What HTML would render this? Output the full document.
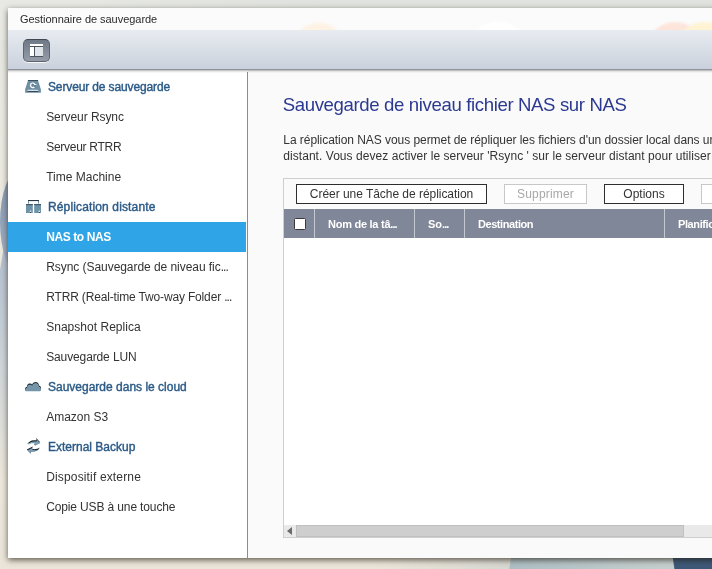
<!DOCTYPE html>
<html lang="fr">
<head>
<meta charset="utf-8">
<title>Gestionnaire de sauvegarde</title>
<style>
html,body{margin:0;padding:0;}
body{width:712px;height:569px;overflow:hidden;position:relative;background:#e8e9e4;font-family:"Liberation Sans",sans-serif;color:#333;}
.abs{position:absolute;}
#wall{left:0;top:0;width:712px;height:569px;overflow:hidden;background:linear-gradient(90deg,rgba(234,234,229,.9),rgba(234,234,229,0) 45%) 0 0/712px 40px no-repeat,linear-gradient(#dfe2de 0,#e4e6e1 20px,#ebeae2 120px,#ece8dd 300px,#ece6db 500px,#ebe5d9 569px);}
#wl{left:0;top:170px;width:40px;height:104px;border-radius:50%;background:linear-gradient(#8a9cb4 0,#93a4ba 50%,#a7b5c6 100%);}
#wl2{left:0;top:228px;width:10px;height:262px;background:linear-gradient(#aab7c7 0,#b7c3cf 40px,#c2ccd4 90px,#cdd4d9 130px,#d7dad9 172px,#e0e0da 205px,rgba(236,231,220,0) 250px);clip-path:polygon(100% 0,70% 0,50% 12px,0 42px,0 100%,100% 100%);}
#wb1{left:511px;top:548px;width:210px;height:22px;background:linear-gradient(90deg,#aebfc5,#c6cfce 75%);transform:skewX(-10deg);}
#wb2{left:673px;top:548px;width:60px;height:22px;background:#3e5977;transform:skewX(8deg);}
#wb0{left:380px;top:548px;width:140px;height:22px;background:linear-gradient(90deg,rgba(214,215,209,0),#d6d7d1);}
#win{will-change:transform;left:8px;top:8px;width:720px;height:550px;background:#fff;box-shadow:0 1.500px 6px 0 rgba(30,22,12,.68);}
#title{left:0;top:0;width:720px;height:22px;background:#fbfbfb;overflow:hidden;}
#title span{position:absolute;left:12px;top:5px;font-size:11px;line-height:12px;color:#2a2a2a;white-space:nowrap;}
.blob{position:absolute;border-radius:50%;filter:blur(.8px);}
#tbar{left:0;top:22px;width:720px;height:40px;background:linear-gradient(#e8ecf1,#cad1dc);border-bottom:1px solid #8f949c;box-sizing:border-box;z-index:2;}
#tsh{left:0;top:62px;width:720px;height:3px;background:linear-gradient(rgba(0,0,0,.30),rgba(0,0,0,.10) 45%,rgba(0,0,0,0));z-index:3;}
#tbtn{left:15px;top:9px;width:27px;height:23px;border-radius:5px;box-sizing:border-box;border:1px solid #5c6471;border-top-color:#414853;background:linear-gradient(#6f7886,#969da9);box-shadow:0 1px 0 rgba(255,255,255,.75);}
#tbtn i{position:absolute;background:#fff;}
#side{left:0;top:62px;width:239px;height:488px;background:#fff;}
#sep{left:239px;top:64px;width:1px;height:486px;background:#8c8c8c;}
#main{left:240px;top:62px;width:480px;height:488px;background:#fafafa;}
.row{position:absolute;left:0;width:237.500px;height:30px;line-height:30px;font-size:12px;white-space:nowrap;color:#333;}
.row>span{position:absolute;left:38.200px;top:0;}
.row.h>span{left:40px;color:#2b5a87;-webkit-text-stroke:0.400px #2b5a87;}
.row.sel{background:#2fa4e7;}
.row.sel>span{color:#fff;font-weight:bold;}
.el{letter-spacing:-0.900px !important;}
.ico{position:absolute;left:16px;top:6px;width:18px;height:16px;}
h1{position:absolute;left:34.700px;top:24px;margin:0;font-size:18.600px;font-weight:normal;line-height:22px;color:#2b3990;white-space:nowrap;}
.p{position:absolute;left:35.300px;font-size:12px;line-height:16px;white-space:nowrap;color:#333;}
#panel{left:35px;top:108px;width:460px;height:360px;border:1px solid #cfcfcf;background:#fff;box-sizing:border-box;}
.btn{position:absolute;top:5px;height:20px;box-sizing:border-box;border:1px solid #2e2e2e;background:#fff;font-size:12px;line-height:18px;text-align:center;color:#333;white-space:nowrap;}
.btn.dis{border-color:#c8c8c8;color:#a8a8a8;}
#ptb{left:0;top:0;width:460px;height:30px;background:#fafafa;}
#thead{left:0;top:30px;width:460px;height:29px;background:#808798;}
.th{position:absolute;top:0;height:29px;line-height:31px;font-size:11px;font-weight:bold;color:#fff;white-space:nowrap;border-left:1px solid #c3c7d0;box-sizing:border-box;padding-left:13px;}
#cb{left:10px;top:9px;width:12px;height:12px;box-sizing:border-box;border:1px solid #3a3a3a;border-radius:1.500px;background:#fff;}
#hs{left:0;top:346px;width:460px;height:12px;background:#e9e9e9;}
#hthumb{left:12px;top:0;width:388px;height:12px;background:#cecece;box-sizing:border-box;border:1px solid #c0c0c0;}
#harr{left:3px;top:2px;width:0;height:0;border-top:4px solid transparent;border-bottom:4px solid transparent;border-right:5px solid #6a6a6a;}
</style>
</head>
<body>
<div id="wall" class="abs"><div id="wl2" class="abs"></div><div id="wl" class="abs"></div><div id="wb0" class="abs"></div><div id="wb1" class="abs"></div><div id="wb2" class="abs"></div></div>
<div id="win" class="abs">
  <div id="title" class="abs">
    <div class="blob" style="left:283px;top:14.500px;width:56px;height:56px;background:#fef2e4"></div>
    <div class="blob" style="left:459px;top:14px;width:62px;height:62px;background:#fff"></div>
    <div class="blob" style="left:638px;top:14px;width:58px;height:58px;background:#fde5dc"></div>
    <div class="blob" style="left:666px;top:14px;width:62px;height:62px;background:#fff3d4"></div>
    <span id="tt" style="letter-spacing:-0.040px;">Gestionnaire de sauvegarde</span>
  </div>
  <div id="tbar" class="abs"><div id="tbtn" class="abs">
    <i style="left:6px;top:4px;width:13px;height:2px"></i>
    <i style="left:6px;top:6px;width:13px;height:1px;background:#4b5361"></i>
    <i style="left:6px;top:7px;width:4px;height:9px"></i>
    <i style="left:10px;top:7px;width:1px;height:9px;background:#4b5361"></i>
    <i style="left:11px;top:7px;width:8px;height:9px;background:#dfe4ea"></i>
    <i style="left:6px;top:16px;width:13px;height:1px;background:#4b5361"></i>
  </div></div>
  <div id="tsh" class="abs"></div>
  <div id="side" class="abs">
    <div class="row h" style="top:2px"><svg class="ico" viewBox="0 0 18 16"><path d="M4.100 2H13.900L16.900 11.500V14.800H1.100V11.500Z" fill="#6d8fa3"/><path d="M4.100 2H13.900L14.200 3H3.800Z" fill="#3a4f5f"/><rect x="3.500" y="11.800" width="10.600" height="1.100" fill="#fff"/><rect x="3.500" y="12.900" width="10.600" height="0.900" fill="#26384a"/><path d="M10.260 8.960A2.200 2.200 0 1 1 10.830 6.830" fill="none" stroke="#fff" stroke-width="1.300"/><rect x="9.800" y="6.100" width="2.600" height="1.200" fill="#fff"/><path d="M7.600 6.600a1.600 1.600 0 0 1 2.200 0M9.900 7.600h2.300" fill="none" stroke="#33485a" stroke-width=".6"/></svg><span id="s0" style="letter-spacing:-0.130px;">Serveur de sauvegarde</span></div>
    <div class="row" style="top:32px"><span id="s1" style="letter-spacing:-0.083px;">Serveur Rsync</span></div>
    <div class="row" style="top:62px"><span id="s2" style="letter-spacing:-0.273px;">Serveur RTRR</span></div>
    <div class="row" style="top:92px"><span id="s3" style="">Time Machine</span></div>
    <div class="row h" style="top:122px"><svg class="ico" viewBox="0 0 18 16"><path d="M4 2.600H15" stroke="#17242e" stroke-width="1"/><path d="M4.500 3.100V5.600M14.500 3.100V5.600" stroke="#6a8da2" stroke-width="1"/><rect x="2" y="6" width="6.800" height="9" fill="#6f93a8"/><rect x="10.200" y="6" width="6.800" height="9" fill="#6f93a8"/><rect x="2" y="6" width="6.800" height="1.200" fill="#46596a"/><rect x="10.200" y="6" width="6.800" height="1.200" fill="#46596a"/><circle cx="6.500" cy="13.200" r=".8" fill="#fff"/><circle cx="15.300" cy="13.200" r=".8" fill="#fff"/><circle cx="6.500" cy="14.300" r=".55" fill="#1b2a35"/><circle cx="15.300" cy="14.300" r=".55" fill="#1b2a35"/></svg><span id="s4" style="letter-spacing:0.137px;">Réplication distante</span></div>
    <div class="row sel" style="top:152px"><span id="s5" style="letter-spacing:-0.411px;">NAS to NAS</span></div>
    <div class="row" style="top:182px"><span id="s6" style="letter-spacing:-0.053px;">Rsync (Sauvegarde de niveau fic<span class="el">...</span></span></div>
    <div class="row" style="top:212px"><span id="s7" style="letter-spacing:-0.160px;">RTRR (Real-time Two-way Folder <span class="el">...</span></span></div>
    <div class="row" style="top:242px"><span id="s8" style="letter-spacing:0.027px;">Snapshot Replica</span></div>
    <div class="row" style="top:272px"><span id="s9" style="letter-spacing:-0.123px;">Sauvegarde LUN</span></div>
    <div class="row h" style="top:302px"><svg class="ico" viewBox="0 0 18 16"><defs><clipPath id="cc"><path d="M2.600 12.600C1.600 12.600 1 12.100 1 11.200C1 9.800 1.900 8.800 3 8.700C2.900 6.900 4 5.500 5.500 5.400C6.700 5.300 7.600 5.900 8.200 6.600C8.700 5 9.900 3.900 11.600 3.900C13.700 3.900 14.900 5.300 15 7.600C16.200 8 17.100 9 17.100 10.600C17.100 12 16.400 12.600 15.400 12.600Z"/></clipPath></defs><path d="M2.600 12.600C1.600 12.600 1 12.100 1 11.200C1 9.800 1.900 8.800 3 8.700C2.900 6.900 4 5.500 5.500 5.400C6.700 5.300 7.600 5.900 8.200 6.600C8.700 5 9.900 3.900 11.600 3.900C13.700 3.900 14.900 5.300 15 7.600C16.200 8 17.100 9 17.100 10.600C17.100 12 16.400 12.600 15.400 12.600Z" fill="#1d2c37"/><path d="M2.600 12.600C1.600 12.600 1 12.100 1 11.200C1 9.800 1.900 8.800 3 8.700C2.900 6.900 4 5.500 5.500 5.400C6.700 5.300 7.600 5.900 8.200 6.600C8.700 5 9.900 3.900 11.600 3.900C13.700 3.900 14.900 5.300 15 7.600C16.200 8 17.100 9 17.100 10.600C17.100 12 16.400 12.600 15.400 12.600Z" fill="#7596a8" transform="translate(0,1)" clip-path="url(#cc)"/><rect x="1.500" y="10.500" width="15.100" height="2.100" fill="#7596a8" clip-path="url(#cc)"/></svg><span id="s10" style="">Sauvegarde dans le cloud</span></div>
    <div class="row" style="top:332px"><span id="s11" style="">Amazon S3</span></div>
    <div class="row h" style="top:362px"><svg class="ico" viewBox="0 0 18 16"><defs><clipPath id="ac"><path d="M3.100 6.300C4.400 3.800 7 2.300 10 2.200L12.600 2.300L12.100 0L16.200 4.200L10.200 7.200L11 5C8.500 4.200 5.500 4.700 3.100 6.300Z"/></clipPath><clipPath id="ad"><path d="M3.100 6.300C4.400 3.800 7 2.300 10 2.200L12.600 2.300L12.100 0L16.200 4.200L10.200 7.200L11 5C8.500 4.200 5.500 4.700 3.100 6.300Z" transform="rotate(180 9.500 7.900)"/></clipPath></defs><path d="M3.100 6.300C4.400 3.800 7 2.300 10 2.200L12.600 2.300L12.100 0L16.200 4.200L10.200 7.200L11 5C8.500 4.200 5.500 4.700 3.100 6.300Z" fill="#16232d"/><path d="M3.100 6.300C4.400 3.800 7 2.300 10 2.200L12.600 2.300L12.100 0L16.200 4.200L10.200 7.200L11 5C8.500 4.200 5.500 4.700 3.100 6.300Z" fill="#7ba0b5" transform="translate(0.300,0.950)" clip-path="url(#ac)"/><path d="M3.100 6.300C4.400 3.800 7 2.300 10 2.200L12.600 2.300L12.100 0L16.200 4.200L10.200 7.200L11 5C8.500 4.200 5.500 4.700 3.100 6.300Z" fill="#16232d" transform="rotate(180 9.500 7.900)"/><g clip-path="url(#ad)"><path d="M3.100 6.300C4.400 3.800 7 2.300 10 2.200L12.600 2.300L12.100 0L16.200 4.200L10.200 7.200L11 5C8.500 4.200 5.500 4.700 3.100 6.300Z" fill="#7ba0b5" transform="translate(0.300,1) rotate(180 9.500 7.900)"/></g></svg><span id="s12" style="">External Backup</span></div>
    <div class="row" style="top:392px"><span id="s13" style="letter-spacing:0.153px;">Dispositif externe</span></div>
    <div class="row" style="top:422px"><span id="s14" style="letter-spacing:-0.133px;">Copie USB à une touche</span></div>
  </div>
  <div id="sep" class="abs"></div>
  <div id="main" class="abs">
    <h1><span id="hd" style="letter-spacing:-0.369px;">Sauvegarde de niveau fichier NAS sur NAS</span></h1>
    <div class="p" style="top:62px"><span id="p1" style="letter-spacing:-0.053px;">La réplication NAS vous permet de répliquer les fichiers d'un dossier local dans</span><span style="letter-spacing:-0.053px;"> un</span></div>
    <div class="p" style="top:78px"><span id="p2" style="letter-spacing:0.048px;">distant. Vous devez activer le serveur 'Rsync ' sur le serveur distant pour utiliser</span></div>
    <div id="panel" class="abs">
      <div id="ptb" class="abs"></div>
      <div class="btn" style="left:12px;width:191px"><span id="b1" style="letter-spacing:-0.038px;">Créer une Tâche de réplication</span></div>
      <div class="btn dis" style="left:220px;width:83px"><span id="b2" style="letter-spacing:0.162px;">Supprimer</span></div>
      <div class="btn" style="left:320px;width:80px"><span id="b3" style="">Options</span></div>
      <div class="btn dis" style="left:417px;width:84px"></div>
      <div id="thead" class="abs">
        <div id="cb" class="abs"></div>
        <div class="th" style="left:30px;width:100px"><span id="h1" style="letter-spacing:-0.264px;">Nom de la tâ<span class="el">...</span></span></div>
        <div class="th" style="left:130px;width:50px"><span id="h2" style="">So<span class="el">...</span></span></div>
        <div class="th" style="left:180px;width:200px"><span id="h3" style="letter-spacing:-0.440px;">Destination</span></div>
        <div class="th" style="left:380px;width:120px"><span id="h4" style="letter-spacing:-0.400px;">Planification</span></div>
      </div>
      <div id="hs" class="abs"><div id="harr" class="abs"></div><div id="hthumb" class="abs"></div></div>
    </div>
  </div>
</div>
</body>
</html>
